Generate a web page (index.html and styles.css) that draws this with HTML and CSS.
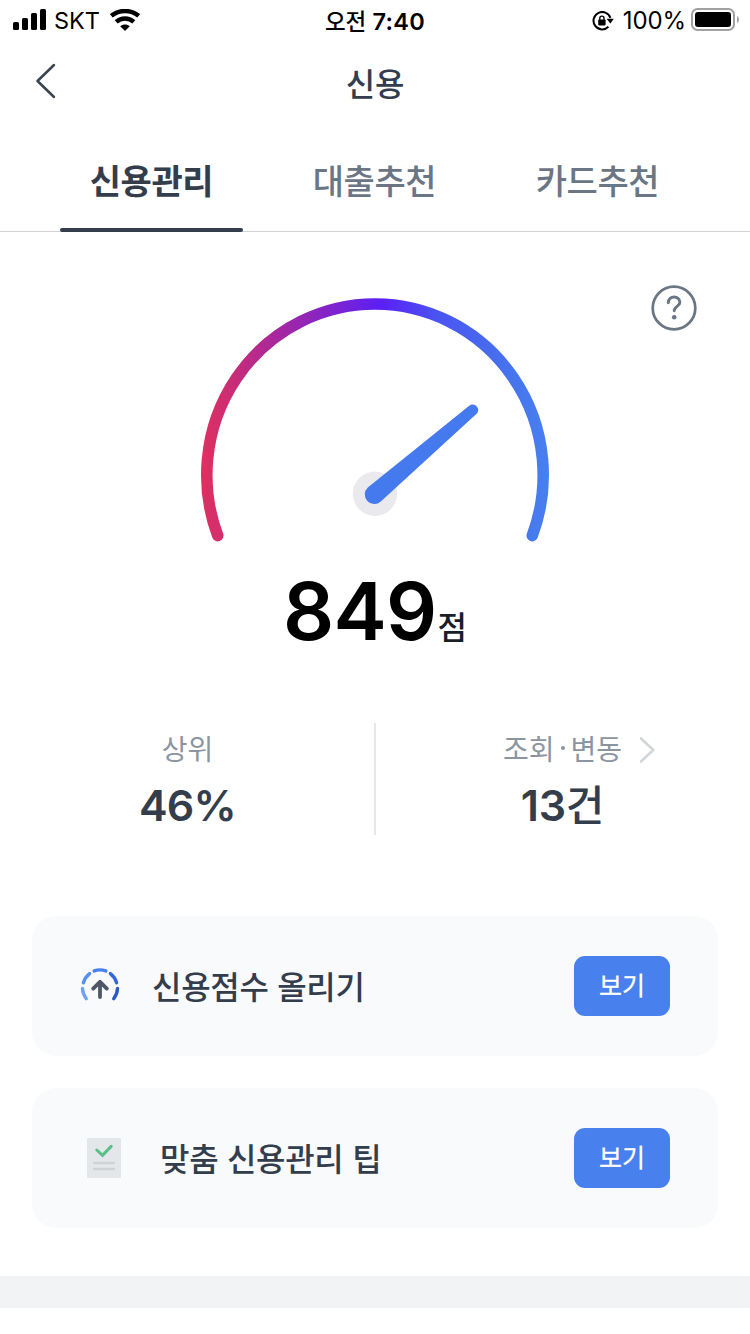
FILE: index.html
```html
<!DOCTYPE html>
<html lang="ko">
<head>
<meta charset="utf-8">
<title>신용</title>
<link rel="stylesheet" href="styles.css">
</head>
<body>
<div class="status">
  <div class="status-side">
    <svg class="signal" width="34" height="22" viewBox="0 0 34 22"><rect x="0" y="13" width="6" height="8" rx="1.5"/><rect x="9" y="9" width="6" height="12" rx="1.5"/><rect x="18" y="4" width="6" height="17" rx="1.5"/><rect x="27" y="0" width="6" height="21" rx="1.5"/></svg>
    <span class="carrier">SKT</span>
    <svg class="wifi" width="30" height="22" viewBox="0 0 30 22"><path d="M1.300 6.900C9.300 .3 20.700 .3 28.700 6.900" fill="none" stroke="#000" stroke-width="4.400"/><path d="M6.200 12.800C11.300 8.300 18.700 8.300 23.800 12.800" fill="none" stroke="#000" stroke-width="4.400"/><path d="M10.200 17.200C13 14.800 17 14.800 19.800 17.200L15 22Z"/></svg>
  </div>
  <div class="clock"><span class="ampm">오전</span> 7:40</div>
  <div class="status-side status-right">
    <svg class="lock" width="22" height="20" viewBox="0 0 22 20"><path d="M18.400 6.800A8.700 8.700 0 1 0 16.400 15.800" fill="none" stroke="#000" stroke-width="2"/><path d="M14.600 7.800H21.900L18.300 12.600Z"/><rect x="6.200" y="8.400" width="7.400" height="6" rx=".8"/><path d="M7.800 9V7.200a2.100 2.100 0 0 1 4.200 0V9" fill="none" stroke="#000" stroke-width="1.400"/></svg>
    <span class="percent">100%</span>
    <svg class="battery" width="48" height="24" viewBox="0 0 48 24"><rect x="1" y="1" width="42" height="21" rx="5.500" fill="none" stroke="#a0a0a0" stroke-width="2"/><rect x="4" y="4" width="36" height="15" rx="3" fill="#000"/><path d="M46 8q2 1 2 3.500t-2 3.500z" fill="#a0a0a0"/></svg>
  </div>
</div>
<header class="nav">
  <svg class="back" width="22" height="36" viewBox="0 0 22 36"><path d="M19 2L2.500 18L19 34" fill="none" stroke="#3a4350" stroke-width="2.500" stroke-linecap="round" stroke-linejoin="round"/></svg>
  <h1 class="title">신용</h1>
</header>
<nav class="tabs">
  <div class="tab tab-active">신용관리</div>
  <div class="tab">대출추천</div>
  <div class="tab">카드추천</div>
</nav>
<main>
  <section class="score">
    <svg class="help" width="46" height="46" viewBox="0 0 46 46"><g fill="none" stroke="#6b7684" stroke-linecap="round"><circle cx="23" cy="23" r="21.300" stroke-width="2.700"/><path d="M17.300 17.800C17.300 10 28.900 10.200 28.900 17.300C28.900 21.500 23.200 21.200 23.200 25.800" stroke-width="2.900"/></g><circle cx="23.200" cy="32.300" r="2.300" fill="#6b7684"/></svg>
    <svg class="gauge" width="350" height="246" viewBox="200 297 350 246">
      <defs><linearGradient id="arc" gradientUnits="userSpaceOnUse" x1="201" y1="0" x2="549" y2="0"><stop offset="0" stop-color="#df3060"/><stop offset=".07" stop-color="#cf2d70"/><stop offset=".25" stop-color="#9f26a8"/><stop offset=".52" stop-color="#5a20f6"/><stop offset=".68" stop-color="#4a55f1"/><stop offset=".9" stop-color="#4675ee"/><stop offset="1" stop-color="#4880ef"/></linearGradient></defs>
      <path d="M217.700 535.600A168.200 171 0 1 1 532.300 535.600" fill="none" stroke="url(#arc)" stroke-width="11.600" stroke-linecap="round"/>
      <circle cx="375" cy="493.800" r="22.200" fill="#e9e9ee"/>
      <path d="M367.800 487.400L469.200 405.800A5.500 5.500 0 0 1 476.900 413.600L380.800 501.400A9.400 9.400 0 0 1 367.800 487.400Z" fill="#457aef"/>
    </svg>
    <div class="points"><span class="points-value">849</span><span class="points-unit">점</span></div>
  </section>
  <section class="stats">
    <div class="stat">
      <div class="stat-label">상위</div>
      <div class="stat-value stat-percent">46%</div>
    </div>
    <div class="stat stat-link">
      <div class="stat-label"><span>조회</span><span class="dot"></span><span>변동</span></div>
      <div class="stat-value">13<span class="unit">건</span></div>
      <svg class="chevron" width="18" height="28" viewBox="0 0 18 28"><path d="M3 2.500L15.300 14L3 25.500" fill="none" stroke="#d1d6db" stroke-width="2.600" stroke-linecap="round" stroke-linejoin="round"/></svg>
    </div>
  </section>
  <section class="cards">
    <div class="card">
      <svg class="card-icon" width="40" height="40" viewBox="80 966 40 40"><g fill="none" stroke-width="3.400" stroke-linecap="round"><path d="M86.300 998.700A17.600 17.600 0 0 1 82.500 988.500" stroke="#6fa2f8"/><path d="M83.400 982.800A17.600 17.600 0 0 1 89.600 973.600" stroke="#5590f7"/><path d="M94.200 970.900A17.600 17.600 0 0 1 105.800 970.900" stroke="#4880ee"/><path d="M110.400 973.600A17.600 17.600 0 0 1 116.600 982.800" stroke="#3468d8"/><path d="M117.500 988.500A17.600 17.600 0 0 1 113.700 998.700" stroke="#2b59c5"/><path d="M100 997V981.800M93.200 988.600L100 981.800L106.800 988.600" stroke="#4e5766" stroke-width="3.800" stroke-linejoin="round"/></g></svg>
      <div class="card-title">신용점수 올리기</div>
      <button class="view">보기</button>
    </div>
    <div class="card">
      <svg class="card-icon doc-icon" width="34" height="40" viewBox="0 0 34 40"><rect width="34" height="40" rx="1" fill="#e3e7ea"/><path d="M9.800 12L15.500 17.300L24.200 8.400" fill="none" stroke="#5abf88" stroke-width="3" stroke-linecap="round"/><path d="M7.200 25H26.800M7.200 31H26.800" stroke="#cfd3d6" stroke-width="2.700" stroke-linecap="round"/></svg>
      <div class="card-title">맞춤 신용관리 팁</div>
      <button class="view">보기</button>
    </div>
  </section>
</main>
<div class="band"></div>
</body>
</html>
```
FILE: styles.css
```css
* { box-sizing: border-box; }
body {
  margin: 0;
  width: 750px;
  height: 1334px;
  overflow: hidden;
  background: #fff;
  color: #333d4b;
  font-family: Inter, "Noto Sans CJK KR", sans-serif;
}
svg { display: block; flex: none; }

.status {
  display: grid;
  grid-template-columns: 1fr auto 1fr;
  height: 40px;
  color: #000;
  font-size: 24px;
  line-height: 42px;
}
.status-side { display: flex; align-items: flex-start; white-space: nowrap; }
.signal { margin: 9px 0 0 13px; }
.carrier { margin-left: 7px; font-size: 23.5px; }
.wifi { margin: 9px 0 0 10px; }
.clock { font-size: 23.5px; font-weight: 600; letter-spacing: .3px; line-height: 40px; white-space: nowrap; }
.ampm { font-family: "Noto Sans CJK KR", sans-serif; font-size: 22.5px; font-weight: 500; letter-spacing: 0; }
.status-right { justify-content: flex-end; }
.lock { margin: 11px 9px 0 0; }
.percent { letter-spacing: -.1px; }
.battery { margin: 8px 11px 0 5px; }

.nav { display: grid; grid-template-columns: 100px 1fr 100px; height: 88px; }
.back { margin: 23px 0 0 35px; }
.title {
  margin: 0;
  padding-top: 18px;
  font: 500 32px/48px "Noto Sans CJK KR", sans-serif;
  letter-spacing: -.3px;
  text-align: center;
}

.tabs {
  display: flex;
  gap: 40px;
  height: 104px;
  padding-left: 60px;
  border-bottom: 1px solid #d1d4d7;
}
.tab {
  width: 183px;
  height: 104px;
  padding-top: 28px;
  color: #6b7684;
  font: 500 34px/48px "Noto Sans CJK KR", sans-serif;
  letter-spacing: -.4px;
  text-align: center;
}
.tab-active {
  display: flex;
  flex-direction: column;
  justify-content: space-between;
  color: #333d4b;
  font-weight: 700;
}
.tab-active::after { content: ""; height: 4px; border-radius: 2px; background: #333d4b; }

.score { position: relative; display: flex; flex-direction: column; align-items: center; height: 491px; padding-top: 65px; }
.help { position: absolute; left: 651px; top: 53px; }
.points { display: flex; align-items: flex-start; margin-top: 20px; color: #000; line-height: 96px; }
.points-value { font-size: 80px; font-weight: 600; letter-spacing: -.7px; }
.points-unit { margin: 38px 0 0 1px; color: #191f28; font: 500 32px/48px "Noto Sans CJK KR", sans-serif; }

.stats { display: flex; height: 112px; }
.stat { position: relative; width: 50%; padding-top: 4px; text-align: center; }
.stat-link { border-left: 2px solid #e5e8eb; margin-left: -1px; }
.stat-label {
  display: flex;
  justify-content: center;
  align-items: center;
  color: #8b95a1;
  font: 400 28px/42px "Noto Sans CJK KR", sans-serif;
}
.dot { width: 4px; height: 4px; margin: 0 6px; border-radius: 50%; background: #8b95a1; }
.stat-value { padding-top: 1px; font-size: 43px; font-weight: 600; line-height: 70px; letter-spacing: -.3px; }
.stat-percent { letter-spacing: -.7px; }
.unit { font: 500 42px/1 "Noto Sans CJK KR", sans-serif; }
.chevron { position: absolute; left: 262px; top: 13px; }

.cards { display: flex; flex-direction: column; gap: 32px; padding: 81px 32px 48px; }
.card { display: flex; align-items: center; height: 140px; padding: 0 48px; border-radius: 24px; background: #f9fafc; }
.card-title { flex: 1; margin-left: 32px; padding-bottom: 2px; font: 500 32px/48px "Noto Sans CJK KR", sans-serif; letter-spacing: -.3px; }
.doc-icon { margin: 0 7px; }
.view {
  width: 96px;
  height: 60px;
  padding: 0 0 4px;
  border: 0;
  border-radius: 11px;
  background: #4880ee;
  color: #fff;
  font: 400 25px/36px "Noto Sans CJK KR", sans-serif;
  -webkit-text-stroke: .3px #fff;
}
.band { height: 32px; background: #f2f3f5; }
```
